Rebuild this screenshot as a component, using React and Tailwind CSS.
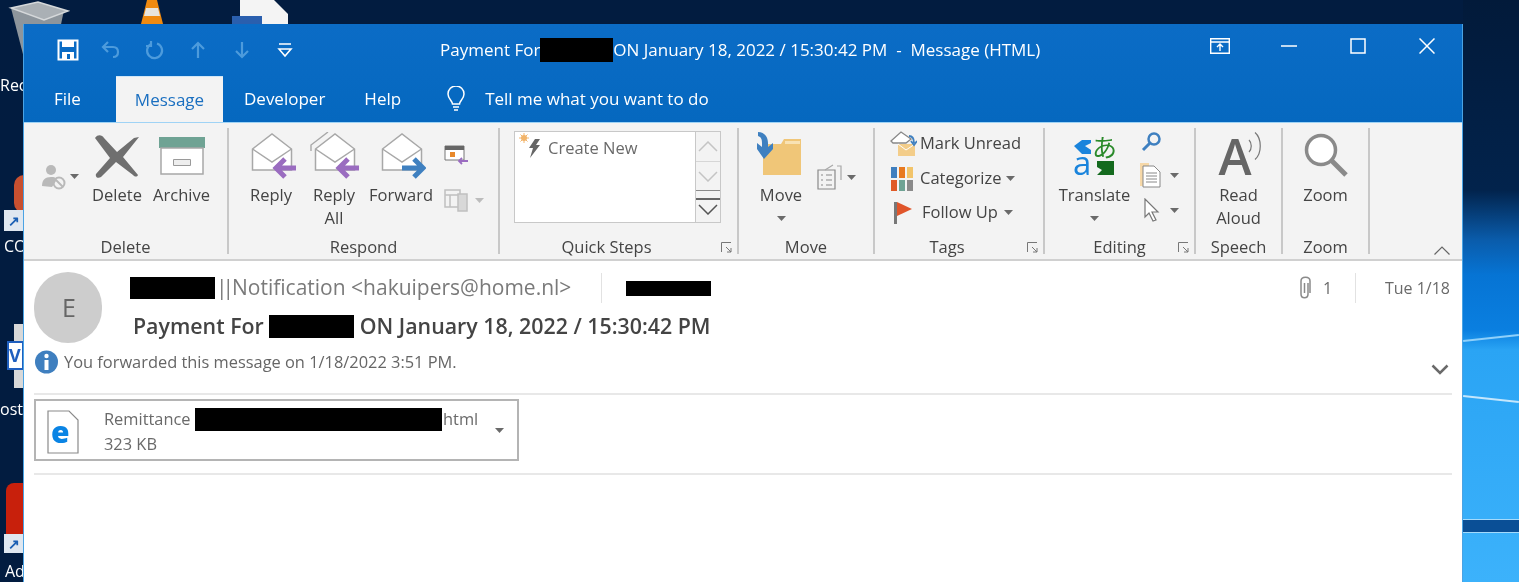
import React from "react";

const font = { fontFamily: '"Open Sans", "Noto Sans", sans-serif' };

const Caret = ({ className = "" }) => (
  <svg width="9" height="5" viewBox="0 0 9 5" className={className}>
    <path d="M0 0h9L4.5 5z" fill="#6a6a6a" />
  </svg>
);

const Redact = ({ className = "" }) => <span className={`inline-block bg-black ${className}`} />;

const Desktop = () => (
  <>
    <div className="absolute left-[1463px] top-0 bottom-0 w-[56px] bg-[linear-gradient(180deg,#021a3a_0,#02234c_190px,#0a5cab_240px,#0674d4_275px,#0a7fe0_330px,#2aa4f4_350px,#3cb2fb_100%)]" />
    <div className="absolute left-[1463px] top-[337px] w-[56px] h-[2px] bg-[#8fd0fa] -rotate-6" />
    <div className="absolute left-[1463px] top-[398px] w-[56px] h-[2px] bg-[#c4e6fc] rotate-6" />
    <div className="absolute left-[1463px] top-[519px] w-[56px] h-[14px] bg-[#0a4f96] border-y border-[#a4dafc]" />
    <svg className="absolute left-[8px] top-0" width="62" height="60" viewBox="0 0 62 60">
      <path d="M3 8 L56 10 L46 58 L16 58Z" fill="#8d959c" />
      <path d="M3 8 L30 2 L60 11 L36 20Z" fill="#aab0b5" stroke="#d5d8da" strokeWidth="1.5" />
    </svg>
    <svg className="absolute left-[140px] top-0" width="24" height="24" viewBox="0 0 24 24">
      <path d="M7 0h10l6 24H1z" fill="#f08a10" />
      <path d="M6 8h12l2 8H4z" fill="#e8e4dc" />
    </svg>
    <svg className="absolute left-[231px] top-0" width="60" height="24" viewBox="0 0 60 24">
      <path d="M9 0h34l14 14v10H9z" fill="#f4f4f4" />
      <path d="M1 16h30v8H1z" fill="#2a5fae" />
    </svg>
    <div className="absolute left-0 top-[76px] text-[16px] leading-[18px] text-white">Rec</div>
    <div className="absolute left-[14px] top-[175px] w-[10px] h-[38px] bg-[#c85030] rounded-l-full" />
    <div className="absolute left-[4px] top-[210px] w-[20px] h-[21px] bg-[#dfe7f0] flex items-center justify-center text-[#1a5fb4] text-[14px] font-bold">↗</div>
    <div className="absolute left-[4px] top-[237px] text-[16px] leading-[18px] text-white">CO</div>
    <div className="absolute left-[14px] top-[324px] w-[10px] h-[64px] bg-[#d8d8d8]" />
    <div className="absolute left-[7px] top-[341px] w-[17px] h-[29px] bg-white border-2 border-[#1f5fbf] text-[#1f5fbf] text-[18px] leading-[24px] font-bold">V</div>
    <div className="absolute left-0 top-[400px] text-[16px] leading-[18px] text-white">ost</div>
    <div className="absolute left-[6px] top-[483px] w-[18px] h-[56px] bg-[#c8200c] rounded-tl-[8px]" />
    <div className="absolute left-[4px] top-[534px] w-[20px] h-[19px] bg-[#dfe7f0] flex items-center justify-center text-[#1a5fb4] text-[14px] font-bold">↗</div>
    <div className="absolute left-[5px] top-[562px] text-[16px] leading-[18px] text-white">Ad</div>
  </>
);

const TitleBar = () => (
  <div className="relative flex items-center h-[52px] text-white">
    <div className="flex items-center ml-[33px] gap-[23.5px]">
      <svg width="22" height="22" viewBox="0 0 22 22" className="-mr-[1.5px]">
        <path d="M1.5 1.5h19v19h-19z" fill="none" stroke="#fff" strokeWidth="2" />
        <path d="M5 2h12v6H5z M5 13h12v8H5z" fill="#fff" />
        <path d="M10 15h3v5h-3z" fill="#0a6cc4" />
      </svg>
      <svg width="20" height="20" viewBox="0 0 20 20" fill="none" stroke="#4d9bdc" strokeWidth="2.2">
        <path d="M7 2 2 7l5 5M2 7h10c3 0 5 2 5 5s-2 5-5 5" />
      </svg>
      <svg width="20" height="20" viewBox="0 0 20 20" fill="none" stroke="#4d9bdc" strokeWidth="2.2">
        <path d="M12 3.5a7.5 7.5 0 1 1-6 .5M6 1v5H1" />
      </svg>
      <svg width="20" height="20" viewBox="0 0 20 20" fill="none" stroke="#4d9bdc" strokeWidth="2.2">
        <path d="M10 18V3M4 9l6-6 6 6" />
      </svg>
      <svg width="20" height="20" viewBox="0 0 20 20" fill="none" stroke="#4d9bdc" strokeWidth="2.2">
        <path d="M10 2v15M4 11l6 6 6-6" />
      </svg>
      <svg width="20" height="20" viewBox="0 0 20 20" fill="none" stroke="#fff" strokeWidth="1.6">
        <path d="M4 4h12M4 9l6 7 6-7z" />
      </svg>
    </div>
    <div className="ml-[145px] flex items-center text-[17px] whitespace-pre">
      <span>Payment For</span>
      <Redact className="w-[73px] h-[24px]" />
      <span>ON January 18, 2022 / 15:30:42 PM  -  Message (HTML)</span>
    </div>
    <div className="absolute right-[27px] top-[14px] flex items-center gap-[53px]">
      <svg width="20" height="16" viewBox="0 0 20 16" fill="none" stroke="#fff" strokeWidth="1.4" className="-mr-[2px]">
        <path d="M.7.7h18.6v14.6H.7zM1 4h18M10 13V6M7 9l3-3 3 3" />
      </svg>
      <svg width="16" height="16" viewBox="0 0 16 16" stroke="#fff" strokeWidth="1.5"><path d="M0 8h16" /></svg>
      <svg width="16" height="16" viewBox="0 0 16 16" fill="none" stroke="#fff" strokeWidth="1.5"><path d="M1 1h14v14H1z" /></svg>
      <svg width="16" height="16" viewBox="0 0 16 16" fill="none" stroke="#fff" strokeWidth="1.5"><path d="M.5.5l15 15M15.5.5l-15 15" /></svg>
    </div>
  </div>
);

const Tabs = () => (
  <div className="flex items-end h-[46px] text-white text-[17px]">
    <div className="ml-[30px] w-[62px] h-[46px] leading-[46px]">File</div>
    <div className="w-[107px] h-[46px] leading-[46px] bg-[#f3f3f3] border-t border-[#cfe6f7] text-[#1a6fc0] text-center">Message</div>
    <div className="ml-[21px] h-[46px] leading-[46px]">Developer</div>
    <div className="ml-[39px] h-[46px] leading-[46px]">Help</div>
    <svg className="ml-[44px] mb-[10px]" width="22" height="26" viewBox="0 0 22 26" fill="none" stroke="#fff" strokeWidth="1.5">
      <path d="M7.5 18c0-3-4.500-5-4.500-10a8 8 0 0 1 16 0c0 5-4.500 7-4.500 10zM8 21h6M9 24h4" />
    </svg>
    <div className="ml-[18px] h-[46px] leading-[46px]">Tell me what you want to do</div>
  </div>
);

const Group = ({ width, label, launcher, labelClass = "", children }) => (
  <div className={`flex shrink-0 ${width}`}>
    <div className="relative flex-1 flex flex-col min-w-0">
      <div className="flex h-[108px]">{children}</div>
      <div className={`h-[22px] leading-[22px] text-center text-[16.500px] text-[#444] ${labelClass}`}>{label}</div>
      {launcher && (
        <svg className="absolute right-[5px] top-[114px]" width="11" height="11" viewBox="0 0 11 11" fill="none" stroke="#777">
          <path d="M.5 10V.5H10M5 5l5 5M6 10h4V6" />
        </svg>
      )}
    </div>
    <div className="w-[2px] h-[126px] bg-[#c8c8c8] shrink-0" />
  </div>
);

const BigBtn = ({ width, lines, icon, caret }) => (
  <div className={`flex flex-col items-center shrink-0 ${width}`}>
    <div className="h-[55px] w-full flex items-start justify-center">{icon}</div>
    {lines.map((l) => (
      <div key={l} className="h-[23px] leading-[23px] text-[16.500px] text-[#444] whitespace-nowrap">{l}</div>
    ))}
    {caret && <Caret className="mt-[10px]" />}
  </div>
);

const Envelope = ({ arrow, color, back }) => (
  <svg width="50" height="50" viewBox="0 0 50 50" className="mt-[4px]" fill="none">
    {back && <path d="M2 19V13L19 0" stroke="#a8a8a8" strokeWidth="1.4" />}
    <path d="M6.500 17 26 2l19.500 15v21h-39z" fill="#fff" stroke="#a8a8a8" strokeWidth="1.500" />
    <path d="M6.500 17 26 30l19.500-13" stroke="#a8a8a8" strokeWidth="1.500" />
    {arrow === "left" ? (
      <path d="M50 36H30M39 27l-9 9 9 9" stroke={color} strokeWidth="5" />
    ) : (
      <path d="M26 36h21M38 27l9 9-9 9" stroke={color} strokeWidth="5" />
    )}
  </svg>
);

const Ribbon = () => (
  <div className="flex h-[139px] pt-[5px] bg-[#f3f3f3] border-t border-[#9fd3f5] border-b-2 border-b-[#d0d0d0]" >
    <Group width="w-[205px]" label="Delete">
      <div className="w-[65px] shrink-0 pt-[36px] pl-[17px] flex items-start gap-[3px]">
        <svg width="26" height="26" viewBox="0 0 26 26" fill="#b9b9b9">
          <circle cx="10" cy="6" r="5" /><path d="M1 22c0-6 3-9 9-9s5 2 5 4l-4 6z" />
          <circle cx="18" cy="19" r="5.500" fill="none" stroke="#b9b9b9" strokeWidth="2" /><path d="M14 15l8 8" stroke="#b9b9b9" strokeWidth="2" />
        </svg>
        <Caret className="mt-[10px]" />
      </div>
      <BigBtn width="w-[56px]" lines={["Delete"]} icon={
        <svg width="46" height="44" viewBox="0 0 46 44" className="mt-[7px]" fill="#6f6f6f">
          <path d="M1 3c3-4 7-3 9 0l13 14L40 3l5-1-16 20 15 18c-1 2-3 2-5 0L22 27 7 42c-3 2-6 0-5-3l14-16z" />
        </svg>
      } />
      <BigBtn width="w-[73px]" lines={["Archive"]} icon={
        <svg width="46" height="38" viewBox="0 0 46 38" className="mt-[9px]">
          <path d="M0 0h46v11H0z" fill="#6fa394" />
          <path d="M2 11h42v26H2z" fill="#fff" stroke="#a8a8a8" strokeWidth="1.500" />
          <path d="M14.500 22.500h17v6h-17z" fill="#eee" stroke="#9a9a9a" />
        </svg>
      } />
    </Group>

    <Group width="w-[271px]" label="Respond">
      <div className="w-[13px] shrink-0" />
      <BigBtn width="w-[58px]" lines={["Reply"]} icon={<Envelope arrow="left" color="#9a6cc0" />} />
      <BigBtn width="w-[68px]" lines={["Reply", "All"]} icon={<Envelope arrow="left" color="#9a6cc0" back />} />
      <BigBtn width="w-[66px]" lines={["Forward"]} icon={<Envelope arrow="right" color="#3f80c0" />} />
      <div className="flex flex-col pl-[10px] pt-[17px] gap-[23px]">
        <svg width="24" height="20" viewBox="0 0 24 20">
          <path d="M1 1h19v14H1z" fill="#fff" stroke="#777" />
          <path d="M1 1h19v4H1z" fill="#666" />
          <path d="M6 7h5v5H6z" fill="#e8892b" />
          <path d="M24 16h-9M18 13l-3 3 3 3" stroke="#9a6cc0" strokeWidth="1.800" fill="none" />
        </svg>
        <div className="flex items-center gap-[6px]">
          <svg width="25" height="24" viewBox="0 0 25 24" fill="none" stroke="#c0c0c0" strokeWidth="1.500">
            <path d="M1 2h15v17H1zM1 7h15M6 7v12" />
            <path d="M14 6h9v17h-9z" fill="#d8d8d8" />
          </svg>
          <svg width="9" height="5" viewBox="0 0 9 5"><path d="M0 0h9L4.500 5z" fill="#bcbcbc" /></svg>
        </div>
      </div>
    </Group>

    <Group width="w-[239px]" label="Quick Steps" launcher labelClass="pr-[24px]">
      <div className="flex ml-[14px] mt-[3px] h-[92px] border border-[#c8c8c8]">
        <div className="relative w-[180px] bg-white pl-[33px] pt-[4px] text-[16.500px] leading-[24px] text-[#6a6a6a] whitespace-nowrap">
          <svg className="absolute left-[4px] top-[1px]" width="24" height="26" viewBox="0 0 24 26">
            <circle cx="5" cy="5" r="3" fill="#f2b46a" />
            <path d="M5 0v10M0 5h10M1.500 1.500l7 7M8.500 1.500l-7 7" stroke="#f2b46a" />
            <path d="M16 6h5l-4 6h4L11 25l3-10h-4z" fill="#666" />
          </svg>
          Create New
        </div>
        <div className="flex flex-col w-[25px] border-l border-[#c8c8c8]">
          <div className="h-[30px] flex items-center justify-center border-b border-[#d6d6d6]">
            <svg width="20" height="11" viewBox="0 0 20 11" fill="none" stroke="#c4c4c4" strokeWidth="1.500"><path d="M1 10l9-9 9 9" /></svg>
          </div>
          <div className="h-[29px] flex items-center justify-center border-b border-[#8a8a8a]">
            <svg width="20" height="11" viewBox="0 0 20 11" fill="none" stroke="#c4c4c4" strokeWidth="1.500"><path d="M1 1l9 9 9-9" /></svg>
          </div>
          <div className="flex-1 flex flex-col items-center justify-center gap-[4px]">
            <div className="h-[2px] w-full bg-[#666]" />
            <svg width="20" height="11" viewBox="0 0 20 11" fill="none" stroke="#555" strokeWidth="1.500"><path d="M1 1l9 9 9-9" /></svg>
          </div>
        </div>
      </div>
    </Group>

    <Group width="w-[136px]" label="Move">
      <div className="w-[15px] shrink-0" />
      <BigBtn width="w-[54px]" lines={["Move"]} caret icon={
        <svg width="48" height="48" viewBox="0 0 48 48" className="mt-[2px]">
          <path d="M6 14h18l3-5h17v36H6z" fill="#f0c678" />
          <path d="M28 11h15v3H28z" fill="#f8e2b4" />
          <path d="M1 2c6 0 10 4 10 11v4l5-4v6l-9 10-7-10v-6l5 4v-4c0-4-1-6-4-7z" fill="#3f80c0" />
        </svg>
      } />
      <div className="flex items-center gap-[4px] ml-[9px] h-[26px] mt-[36px]">
        <svg width="26" height="26" viewBox="0 0 26 26" fill="none" stroke="#8a8a8a" strokeWidth="1.200">
          <path d="M1 6h17v19H1zM4 11h2M9 11h6M4 16h2M9 16h6M4 21h2M9 21h6" />
          <path d="M8 6l8-5M20 2h4v14" stroke="#a8a8a8" />
        </svg>
        <Caret />
      </div>
    </Group>

    <Group width="w-[170px]" label="Tags" launcher labelClass="pr-[24px]">
      <div className="flex flex-col ml-[15px] mt-[2px] text-[16.500px] text-[#444] whitespace-nowrap">
        <div className="flex items-center h-[27px] mb-[8px]">
          <svg width="27" height="26" viewBox="0 0 27 26" className="mr-[3px]">
            <path d="M1 10 11 1l10 7-5 4H3z" fill="#fff" stroke="#888" strokeWidth="1.300" />
            <path d="M8 13h17v12H8z" fill="#f3cd8a" />
            <path d="M8 13l8 6 9-6" fill="none" stroke="#fff" />
            <path d="M19 5c4 0 5 3 5 7M21 10l3 4 3-4" stroke="#3f80c0" strokeWidth="1.800" fill="none" />
          </svg>
          Mark Unread
        </div>
        <div className="flex items-center h-[27px] mb-[7px]">
          <svg width="22" height="24" viewBox="0 0 22 24" className="mr-[7px] ml-[1px]">
            <path d="M0 0h6v11H0z" fill="#3f7fbf" /><path d="M8 0h6v11H8z" fill="#e8791f" /><path d="M16 0h6v11h-6z" fill="#f2c46a" />
            <path d="M0 13h6v11H0z" fill="#e05a26" /><path d="M8 13h6v11H8z" fill="#6fa394" /><path d="M16 13h6v11h-6z" fill="#8a8a8a" />
          </svg>
          Categorize<Caret className="ml-[4px]" />
        </div>
        <div className="flex items-center h-[27px]">
          <svg width="20" height="24" viewBox="0 0 20 24" className="mr-[9px] ml-[3px]">
            <path d="M1 1h3v22H1z" fill="#777" /><path d="M4 1l15 7-15 7z" fill="#e0552a" />
          </svg>
          Follow Up<Caret className="ml-[6px]" />
        </div>
      </div>
    </Group>

    <Group width="w-[151px]" label="Editing" launcher>
      <div className="w-[8px] shrink-0" />
      <BigBtn width="w-[83px]" lines={["Translate"]} caret icon={
        <svg width="44" height="46" viewBox="0 0 44 46" className="mt-[5px]">
          <path d="M1 13 9 7h9v3l-6 3 6 4v4H9z" fill="#1a84dc" />
          <text x="19" y="24" fontSize="25" fill="#2a8a2a" fontFamily='"Noto Sans CJK JP", sans-serif'>あ</text>
          <text x="0" y="42" fontSize="33" fill="#1a84dc" fontFamily='"Open Sans", sans-serif'>a</text>
          <path d="M24 28h17v14H24l5-5-5-3z" fill="#146a1e" />
        </svg>
      } />
      <div className="flex flex-col pl-[3px] pt-[3px]">
        <svg width="22" height="22" viewBox="0 0 22 22" className="ml-[2px]" fill="none">
          <circle cx="13" cy="8" r="5.500" stroke="#3f80c0" strokeWidth="2.500" />
          <path d="M9 12l-7 7" stroke="#3f80c0" strokeWidth="3" />
        </svg>
        <div className="flex items-center gap-[9px] mt-[9px]">
          <svg width="22" height="26" viewBox="0 0 22 26">
            <path d="M1 1h9v3H4v20H1z" fill="#f6d8a8" />
            <path d="M4 4h11l6 6v15H4z" fill="#fff" stroke="#888" />
            <path d="M7 11h11M7 14h11M7 17h11M7 20h11" stroke="#888" />
          </svg>
          <Caret />
        </div>
        <div className="flex items-center gap-[10px] mt-[10px] ml-[5px]">
          <svg width="16" height="24" viewBox="0 0 16 24">
            <path d="M1 1v18l4-4 4 8 3-1-4-8h6z" fill="#fff" stroke="#777" strokeWidth="1.200" />
          </svg>
          <Caret />
        </div>
      </div>
    </Group>

    <Group width="w-[87px]" label="Speech">
      <BigBtn width="w-full" lines={["Read", "Aloud"]} icon={
        <div className="relative h-[55px] w-[46px]">
          <span className="absolute left-[3px] top-[3px] text-[50px] leading-[50px] font-semibold text-[#666]">A</span>
          <svg className="absolute left-[32px] top-[4px]" width="14" height="28" viewBox="0 0 14 28" fill="none" stroke="#777" strokeWidth="1.200">
            <path d="M1 8c3 3 3 9 0 12M7 .5c7 6 7 21 0 27" />
          </svg>
        </div>
      } />
    </Group>

    <Group width="w-[87px]" label="Zoom">
      <BigBtn width="w-full" lines={["Zoom"]} icon={
        <svg width="44" height="44" viewBox="0 0 44 44" className="mt-[5px]" fill="none">
          <circle cx="17" cy="17" r="14.500" fill="#fff" stroke="#8a8a8a" strokeWidth="3.500" />
          <path d="M27 27l15 15" stroke="#8a8a8a" strokeWidth="5" />
        </svg>
      } />
    </Group>

    <svg className="absolute left-[1410px] top-[222px]" width="16" height="9" viewBox="0 0 16 9" fill="none" stroke="#666" strokeWidth="1.200">
      <path d="M.5 8.500 8 1l7.500 7.500" />
    </svg>
  </div>
);

const MessageBody = () => (
  <div className="flex-1 bg-white px-[10px]">
    <div className="flex">
      <div className="w-[68px] h-[71px] mt-[11px] pl-[2px] rounded-full bg-[#cdcdcd] flex items-center justify-center text-[25px] text-[#666] shrink-0">E</div>
      <div className="ml-[28px] flex-1 min-w-0">
        <div className="flex items-center h-[22px] mt-[16px]">
          <Redact className="w-[85px] h-[22px]" />
          <div className="flex ml-[1px] w-[385px] text-[21px] text-[#7a7a7a] whitespace-nowrap">
            <span className="w-[16px] tracking-[-5px]">||</span>
            <span>Notification &lt;hakuipers@home.nl&gt;</span>
          </div>
          <div className="w-px h-[30px] bg-[#e2e2e2]" />
          <Redact className="ml-[24px] w-[85px] h-[15px]" />
          <div className="ml-auto mr-[2px] flex items-center text-[16px] text-[#6a6a6a]">
            <svg width="14" height="24" viewBox="0 0 14 24" fill="none" stroke="#8a8a8a" strokeWidth="1.500">
              <path d="M10 7v11c0 5-7 5-7 0V5c0-5 9-5 9 0v12M6.500 7v10" />
            </svg>
            <span className="ml-[11px] w-[32px]">1</span>
            <div className="w-px h-[30px] bg-[#e2e2e2]" />
            <span className="ml-[29px]">Tue 1/18</span>
          </div>
        </div>
        <div className="flex items-center h-[24px] mt-[15px] ml-[3px] text-[21.350px] font-semibold text-[#444] whitespace-nowrap">
          <span>Payment For</span>
          <Redact className="ml-[5px] w-[85px] h-[23px]" />
          <span className="ml-[6px]">ON January 18, 2022 / 15:30:42 PM</span>
        </div>
      </div>
    </div>
    <div className="flex items-center h-[24px] mt-[7px] text-[16.400px] text-[#666] whitespace-nowrap">
      <svg width="23" height="24" viewBox="0 0 23 24" className="mr-[6px] ml-[1px]">
        <circle cx="11.500" cy="12" r="11.500" fill="#3f7fbf" />
        <circle cx="11.500" cy="6" r="2.200" fill="#fff" />
        <path d="M9.500 10h4v10h-4z" fill="#fff" />
      </svg>
      You forwarded this message on 1/18/2022 3:51 PM.
      <svg className="ml-auto mr-[3px] mt-[14px]" width="18" height="11" viewBox="0 0 18 11" fill="none" stroke="#6a6a6a" strokeWidth="2.500">
        <path d="M1.500 1.500 9 9l7.500-7.500" />
      </svg>
    </div>
    <div className="h-[2px] bg-[#e8e8e8] mt-[19px]" />
    <div className="flex w-[485px] h-[62px] mt-[4px] border-2 border-[#b4b4b4]">
      <svg width="32" height="44" viewBox="0 0 32 44" className="ml-[11px] mt-[9px] shrink-0">
        <path d="M1 1h21l9 9v33H1z" fill="#fff" stroke="#8a8a8a" strokeWidth="1.200" />
        <text x="4" y="33" fontSize="30" fontWeight="800" fill="#0a84e4" fontFamily='"Open Sans", sans-serif'>e</text>
      </svg>
      <div className="ml-[25px] flex-1 text-[16.400px] text-[#6a6a6a]">
        <div className="flex items-center h-[24px] mt-[6px] whitespace-nowrap">
          <span className="w-[91px]">Remittance</span>
          <Redact className="w-[247px] h-[23px]" />
          <span className="ml-[1px]">html</span>
        </div>
        <div className="leading-[24px] mt-[1px]">323 KB</div>
      </div>
      <Caret className="mt-[27px] mr-[13px]" />
    </div>
    <div className="h-[2px] bg-[#e8e8e8] mt-[12px]" />
  </div>
);

export default function App() {
  return (
    <div className="relative w-[1519px] h-[582px] overflow-hidden bg-[#021c40] blur-[0.5px]" style={font}>
      <Desktop />
      <div className="absolute left-[23px] top-[24px] w-[1440px] h-[558px] flex flex-col bg-[linear-gradient(180deg,#0b6cc6,#0568bf_98px)] border-x border-[#4aa3e4]">
        <TitleBar />
        <Tabs />
        <Ribbon />
        <MessageBody />
      </div>
    </div>
  );
}
